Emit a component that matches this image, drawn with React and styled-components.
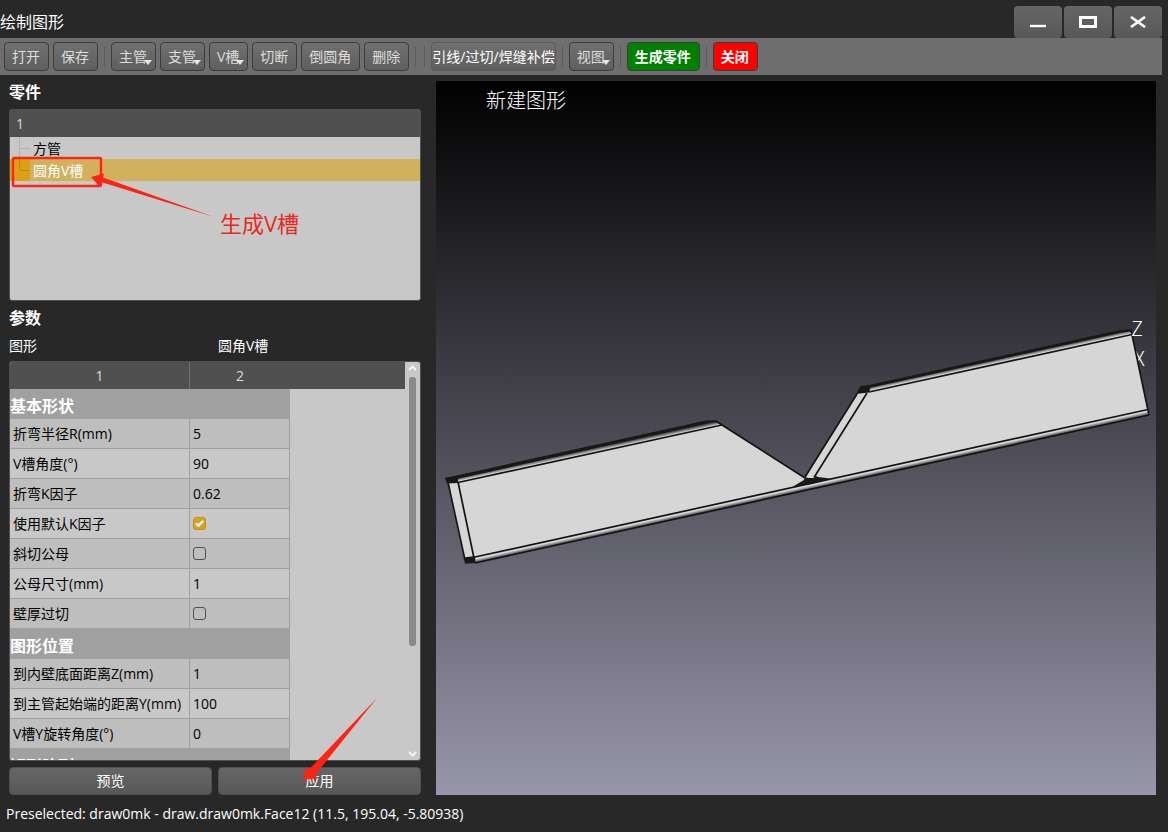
import React, { useState } from 'react';
import styled, { createGlobalStyle } from 'styled-components';

const GlobalStyle = createGlobalStyle`
  * {
    box-sizing: border-box;
  }
  body {
    margin: 0;
    background: #282828;
  }
  body, button, input, table {
    font-family: "Open Sans", "Noto Sans CJK SC", sans-serif;
    font-size: 14px;
    font-weight: 400;
  }
`;

const Window = styled.div`
  display: flex;
  flex-direction: column;
  height: 100vh;
  min-height: 560px;
  background: #282828;
  color: #fff;
`;

const TitleBar = styled.header`
  display: flex;
  align-items: flex-end;
  justify-content: space-between;
  height: 38px;
  padding-right: 6px;
`;

const Title = styled.h1`
  margin: 0;
  font-size: 16px;
  font-weight: 400;
  line-height: 32px;
`;

const WindowButtons = styled.div`
  display: flex;
  gap: 2px;
`;

const WindowButton = styled.button`
  display: flex;
  align-items: center;
  justify-content: center;
  width: 48px;
  height: 32px;
  padding: 0;
  border: 0;
  border-radius: 4px;
  background: linear-gradient(#666, #585858);
`;

const Toolbar = styled.nav`
  display: flex;
  align-items: center;
  gap: 4px;
  flex: 0 0 37px;
  margin-right: 6px;
  padding-left: 4px;
  background: #6e6e6e;
`;

const toolFill = {
  green: '#008000',
  red: '#fe0000',
};

const ToolButton = styled.button`
  position: relative;
  height: 29px;
  padding: ${props => props.$wide ? '0' : '0 8px 0 7px'};
  border: 1px solid ${props => props.$wide ? '#5a5a5a' : '#3c3c3c'};
  border-radius: 4px;
  background: ${props => toolFill[props.$tone] || 'linear-gradient(#707070, #5f5f5f)'};
  color: ${props => props.$tone || props.$wide ? '#fff' : '#dcdcdc'};
  font-weight: ${props => props.$tone ? 700 : 400};
  line-height: 26px;
  white-space: nowrap;
`;

const MenuArrow = styled.svg`
  position: absolute;
  right: 3px;
  bottom: 5px;
  width: 8px;
  height: 5px;
`;

const Divider = styled.span`
  width: 1px;
  height: 21px;
  margin: 0 2px;
  background: #5c5c5c;
`;

const Main = styled.main`
  display: grid;
  grid-template-columns: minmax(300px, 412px) minmax(0, 1fr);
  gap: 15px;
  flex: 1;
  min-height: 0;
  padding: 0 12px 0 9px;
`;

const Side = styled.section`
  display: flex;
  flex-direction: column;
  min-height: 0;
`;

const Heading = styled.h2`
  margin: 0;
  font-size: 16px;
  font-weight: 700;
  line-height: 34px;
`;

const Panel = styled.div`
  position: relative;
  border: 1px solid #505050;
  border-radius: 3px;
  background: #c8c8c8;
  color: #000;
`;

const PartsPanel = styled(Panel)`
  flex: 0 0 192px;
`;

const PartsHeader = styled.div`
  height: 27px;
  padding-left: 6px;
  background: #505050;
  color: #dcdcdc;
  line-height: 27px;
`;

const PartsList = styled.ul`
  margin: 0;
  padding: 0;
  list-style: none;
`;

const PartItem = styled.li`
  display: flex;
  height: 22px;
  background: ${props => props.$selected ? '#d2b15d' : 'transparent'};
  color: ${props => props.$selected ? '#fff' : '#000'};
  line-height: 24px;
`;

const Branch = styled.svg`
  width: 20px;
  height: 22px;
  margin-right: 3px;
  background: ${props => props.$selected ? '#dba018' : 'transparent'};
`;

const PartsNote = styled.svg`
  position: absolute;
  top: 0;
  left: 0;
  width: 320px;
  height: 190px;
  pointer-events: none;
`;

const ShapeRow = styled.div`
  display: grid;
  grid-template-columns: 1fr 1fr;
  gap: 6px;
  height: 26px;
  line-height: 22px;
`;

const ParamPanel = styled(Panel)`
  display: flex;
  flex: 1;
  min-height: 0;
  overflow: hidden;
`;

const TableArea = styled.div`
  flex: 1;
  min-width: 0;
  overflow-x: hidden;
  overflow-y: auto;
  scrollbar-width: none;
`;

const ParamTable = styled.table`
  width: 100%;
  border-collapse: separate;
  border-spacing: 0;
  table-layout: fixed;
`;

const HeadCell = styled.th`
  width: ${props => props.$width || 'auto'};
  height: 27px;
  padding: 0;
  border-right: ${props => props.$line ? '1px solid #6e6e6e' : '0'};
  background: #505050;
  color: #dcdcdc;
  font-weight: 400;
`;

const GroupCell = styled.th`
  height: 30px;
  padding: 4px 0 0;
  background: #a0a0a0;
  color: #fff;
  font-size: 16px;
  font-weight: 700;
  line-height: 26px;
  text-align: left;
`;

const Cell = styled.td`
  height: 30px;
  padding: 0 0 0 3px;
  border-right: 1px solid #a0a0a0;
  border-bottom: 1px solid #a0a0a0;
  background: ${props => props.$odd ? '#c8c8c8' : '#bebebe'};
  line-height: 28px;
  white-space: nowrap;
`;

const CheckWrap = styled.label`
  position: relative;
  display: block;
  width: 13px;
  height: 13px;
`;

const CheckBox = styled.input`
  display: block;
  width: 13px;
  height: 13px;
  margin: 0;
  appearance: none;
  border: 1px solid #505050;
  border-radius: 3px;
  &:checked {
    border-color: #c8911a;
    background: #dca019;
  }
`;

const Tick = styled.svg`
  position: absolute;
  top: 0;
  left: 0;
  pointer-events: none;
`;

const ScrollBar = styled.div`
  display: flex;
  flex-direction: column;
  align-items: center;
  justify-content: space-between;
  width: 15px;
  padding: 3px 0;
`;

const ScrollTrack = styled.div`
  flex: 1;
  width: 7px;
  margin: 6px 0;
`;

const ScrollThumb = styled.div`
  height: 73%;
  border-radius: 3px;
  background: #8a8a8a;
`;

const Actions = styled.div`
  position: relative;
  display: grid;
  grid-template-columns: 1fr 1fr;
  gap: 6px;
  margin-top: 6px;
`;

const ActionButton = styled.button`
  height: 28px;
  padding: 0;
  border: 1px solid #505050;
  border-radius: 4px;
  background: linear-gradient(#666, #585858);
  color: #fff;
  line-height: 26px;
`;

const ActionNote = styled.svg`
  position: absolute;
  bottom: 14px;
  left: calc(50% + 88px);
  width: 76px;
  height: 86px;
  pointer-events: none;
`;

const Viewport = styled.section`
  min-height: 0;
  margin-top: 6px;
  background: linear-gradient(#000, #9896aa);
`;

const Scene = styled.svg`
  display: block;
  width: 100%;
  height: 100%;
`;

const SceneText = styled.text`
  fill: #fff;
  font-family: "Noto Sans CJK SC", sans-serif;
  font-size: 20px;
  font-weight: 300;
`;

const Status = styled.footer`
  flex: 0 0 37px;
  padding-left: 6px;
  line-height: 37px;
`;

const tools = [
  { label: '打开' },
  { label: '保存' },
  null,
  { label: '主管', menu: true },
  { label: '支管', menu: true },
  { label: 'V槽', menu: true },
  { label: '切断' },
  { label: '倒圆角' },
  { label: '删除' },
  null,
  null,
  { label: '引线/过切/焊缝补偿', wide: true },
  null,
  { label: '视图', menu: true },
  null,
  { label: '生成零件', tone: 'green' },
  null,
  { label: '关闭', tone: 'red' },
];

const groups = [
  {
    title: '基本形状',
    rows: [
      ['折弯半径R(mm)', '5'],
      ['V槽角度(°)', '90'],
      ['折弯K因子', '0.62'],
      ['使用默认K因子', true],
      ['斜切公母', false],
      ['公母尺寸(mm)', '1'],
      ['壁厚过切', false],
    ],
  },
  {
    title: '图形位置',
    rows: [
      ['到内壁底面距离Z(mm)', '1'],
      ['到主管起始端的距离Y(mm)', '100'],
      ['V槽Y旋转角度(°)', '0'],
    ],
  },
  { title: '矩形阵列', rows: [] },
];

function Check({ label, initial }) {
  const [checked, setChecked] = useState(initial);
  return (
    <CheckWrap>
      <CheckBox
        type="checkbox"
        aria-label={label}
        checked={checked}
        onChange={e => setChecked(e.target.checked)}
      />
      {checked && (
        <Tick width="13" height="13" viewBox="0 0 13 13">
          <path d="M2.8 6.3l2.5 2.4L10.3 4" fill="none" stroke="#fff" strokeWidth="2.4" />
        </Tick>
      )}
    </CheckWrap>
  );
}

function ParamGroup({ title, rows }) {
  return (
    <tbody>
      <tr>
        <GroupCell colSpan={2} scope="rowgroup">{title}</GroupCell>
      </tr>
      {rows.map(([label, value], i) => (
        <tr key={label}>
          <Cell $odd={i % 2 === 1}>{label}</Cell>
          <Cell $odd={i % 2 === 1}>
            {typeof value === 'boolean' ? <Check label={label} initial={value} /> : value}
          </Cell>
        </tr>
      ))}
    </tbody>
  );
}

// Square tube with a rounded V slot cut out of it
function TubeScene() {
  return (
    <Scene viewBox="436 81 720 714" preserveAspectRatio="xMidYMid meet">
      <defs>
        <linearGradient id="topLeft" gradientUnits="userSpaceOnUse" x1="500" y1="468" x2="501.08" y2="473">
          <stop offset="0" stopColor="#222" />
          <stop offset="0.8" stopColor="#d6d6d6" />
        </linearGradient>
        <linearGradient id="topRight" gradientUnits="userSpaceOnUse" x1="940" y1="371" x2="941.09" y2="376">
          <stop offset="0" stopColor="#222" />
          <stop offset="0.8" stopColor="#d6d6d6" />
        </linearGradient>
        <linearGradient id="bottom" gradientUnits="userSpaceOnUse" x1="700" y1="507.7" x2="701.23" y2="513.3">
          <stop offset="0.35" stopColor="#d6d6d6" />
          <stop offset="1" stopColor="#333" />
        </linearGradient>
      </defs>
      <SceneText x="486" y="108">新建图形</SceneText>
      <SceneText x="1134" y="366">X</SceneText>
      <path d="M447 480L716 422L722 425L805 478L857 394L868 387L1131 330L1149 414L475 563L465 562Z" fill="#d6d6d6" />
      <path d="M458 477L716 421L722 425L458 482.5Z" fill="url(#topLeft)" />
      <path d="M870 386L1131 330L1132 334.5L869 392Z" fill="url(#topRight)" />
      <path d="M475 557L1148 409.5L1149 414.5L475 563Z" fill="url(#bottom)" />
      <g fill="none" stroke="#141414" strokeWidth="1.7">
        <path d="M458 482.5L722 425" />
        <path d="M869 392L1132 334.5" />
        <path d="M475 557L1148 409.5" />
        <path d="M475 563L1149 415" />
        <path d="M447.5 480L465 560" />
        <path d="M458 482L474 558" />
        <path d="M716 421L722 425L805 478" />
        <path d="M857 394L805 477" />
        <path d="M867 393L814 477.5" />
        <path d="M1131 330L1149 415" />
      </g>
      <g fill="#181818">
        <path d="M445 478L706 420.5L717 420L717 422L708 423L450 480.5Z" />
        <path d="M860 387L1120 330L1131 329L1131 331.5L1122 332.5L862 389.5Z" />
        <path d="M445 478L458 475.5L458 483L447 483.5Z" />
        <path d="M463.5 557.5L475 556L475.5 563L465 563.8Z" />
        <path d="M860.5 386L871 385.5L869 392.5L856 394Z" />
        <path d="M793 486.5L804 480L805 477L808 478L814 478L816 476L818 477L830 478.5L812 484Z" />
      </g>
      <SceneText x="1131" y="336">Z</SceneText>
    </Scene>
  );
}

export default function App() {
  return (
    <Window>
      <GlobalStyle />
      <TitleBar>
        <Title>绘制图形</Title>
        <WindowButtons>
          <WindowButton aria-label="最小化">
            <svg width="18" height="14" viewBox="0 0 18 14">
              <path d="M1 11h16" stroke="#fff" strokeWidth="2.4" />
            </svg>
          </WindowButton>
          <WindowButton aria-label="最大化">
            <svg width="18" height="12" viewBox="0 0 18 12">
              <rect x="1.5" y="1.5" width="15" height="9" fill="none" stroke="#fff" strokeWidth="3" />
            </svg>
          </WindowButton>
          <WindowButton aria-label="关闭窗口">
            <svg width="16" height="12" viewBox="0 0 16 12">
              <path d="M1 1l14 10M15 1L1 11" stroke="#fff" strokeWidth="2.6" />
            </svg>
          </WindowButton>
        </WindowButtons>
      </TitleBar>
      <Toolbar>
        {tools.map((tool, i) => tool ? (
          <ToolButton key={i} $wide={tool.wide} $tone={tool.tone}>
            {tool.label}
            {tool.menu && (
              <MenuArrow viewBox="0 0 8 5">
                <path d="M0 0h8L4 5z" fill="#e6e6e6" />
              </MenuArrow>
            )}
          </ToolButton>
        ) : <Divider key={i} />)}
      </Toolbar>
      <Main>
        <Side>
          <Heading>零件</Heading>
          <PartsPanel>
            <PartsHeader>1</PartsHeader>
            <PartsList>
              <PartItem>
                <Branch viewBox="0 0 20 22">
                  <path d="M9.5 0V22M9.5 11.5H20" fill="none" stroke="#b0b0b0" />
                </Branch>
                方管
              </PartItem>
              <PartItem $selected>
                <Branch $selected viewBox="0 0 20 22">
                  <path d="M9.5 0V9.5Q9.5 11.5 11.5 11.5H20" fill="none" stroke="#b98a1c" />
                </Branch>
                圆角V槽
              </PartItem>
            </PartsList>
            <PartsNote viewBox="10 110 320 190">
              <rect x="13" y="158" width="88" height="28" rx="1" fill="none" stroke="#fc2414" strokeWidth="2.4" />
              <path d="M91 177L104 173.5L103 177.5L214 217L101 182L99 186Z" fill="#fc2414" />
              <text x="220" y="232" fill="#e8281c" fontSize="22">生成V槽</text>
            </PartsNote>
          </PartsPanel>
          <Heading>参数</Heading>
          <ShapeRow>
            <span>图形</span>
            <span>圆角V槽</span>
          </ShapeRow>
          <ParamPanel>
            <TableArea>
              <ParamTable>
                <thead>
                  <tr>
                    <HeadCell $width="180px" $line>1</HeadCell>
                    <HeadCell $width="100px">2</HeadCell>
                    <HeadCell />
                  </tr>
                </thead>
                {groups.map(group => <ParamGroup key={group.title} {...group} />)}
              </ParamTable>
            </TableArea>
            <ScrollBar>
              <svg width="9" height="6" viewBox="0 0 9 6">
                <path d="M1 5l3.5-3.5L8 5" fill="none" stroke="#f4f4f4" strokeWidth="2" />
              </svg>
              <ScrollTrack>
                <ScrollThumb />
              </ScrollTrack>
              <svg width="9" height="6" viewBox="0 0 9 6">
                <path d="M1 1l3.5 3.5L8 1" fill="none" stroke="#f4f4f4" strokeWidth="2" />
              </svg>
            </ScrollBar>
          </ParamPanel>
          <Actions>
            <ActionButton>预览</ActionButton>
            <ActionButton>应用</ActionButton>
            <ActionNote viewBox="303 695 76 86">
              <path d="M303 780L306 767L309 769.5L377 698L315 775L318 778Z" fill="#fc2414" />
            </ActionNote>
          </Actions>
        </Side>
        <Viewport>
          <TubeScene />
        </Viewport>
      </Main>
      <Status>Preselected: draw0mk - draw.draw0mk.Face12 (11.5, 195.04, -5.80938)</Status>
    </Window>
  );
}
